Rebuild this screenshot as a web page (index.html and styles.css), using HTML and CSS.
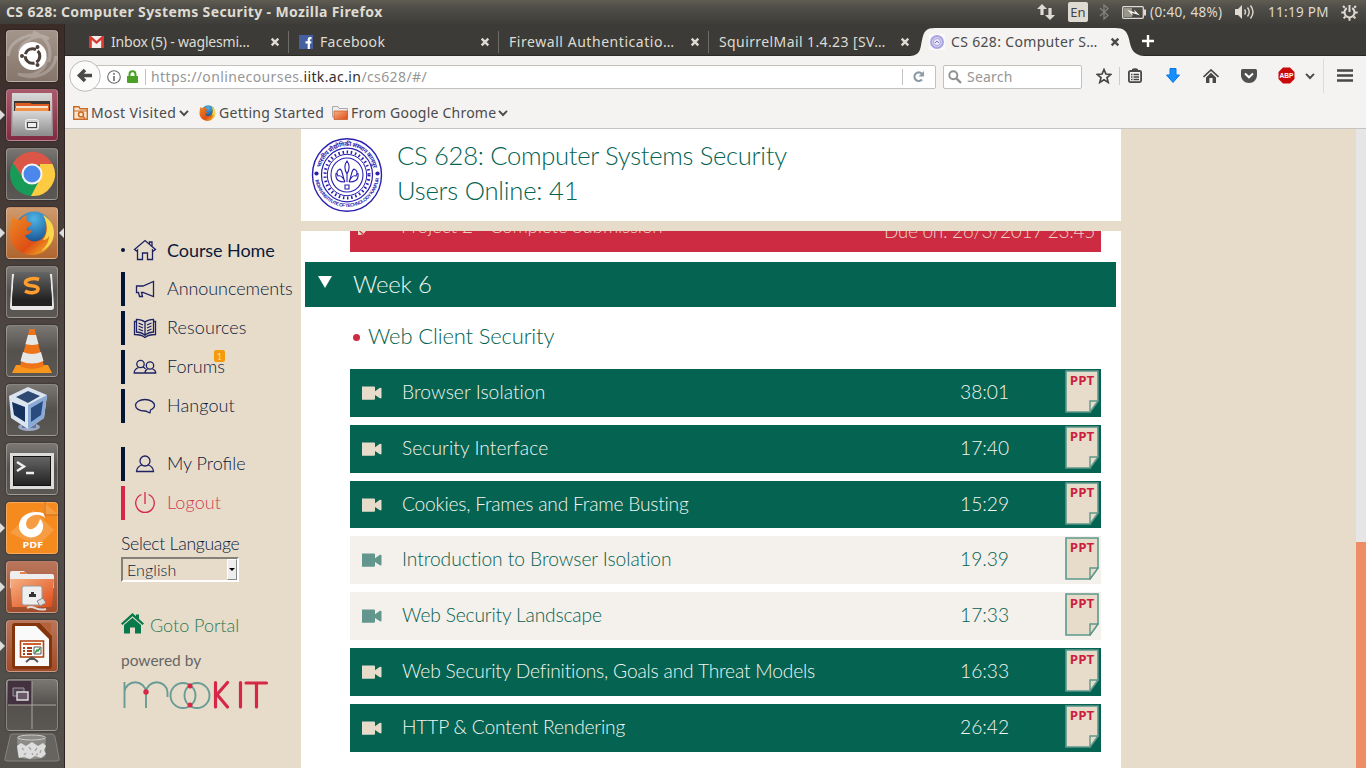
FILE: index.html
```html
<!DOCTYPE html>
<html lang="en">
<head>
<meta charset="utf-8">
<title>CS 628: Computer Systems Security</title>
<link rel="stylesheet" href="styles.css">
</head>
<body>
<svg class="defs" width="0" height="0">
  <defs>
    <linearGradient id="steel" x1="0" y1="0" x2="0" y2="1"><stop offset="0" stop-color="#d8d8d8"/><stop offset="1" stop-color="#8e8e8e"/></linearGradient>
    <linearGradient id="flame" x1="0" y1="0" x2="1" y2="1"><stop offset="0" stop-color="#f08a24"/><stop offset=".6" stop-color="#dd4f15"/><stop offset="1" stop-color="#f7c52c"/></linearGradient>
    <radialGradient id="globe" cx=".5" cy=".2" r=".8"><stop offset="0" stop-color="#4fb4e6"/><stop offset="1" stop-color="#0b3a7c"/></radialGradient>
    <linearGradient id="folder" x1="0" y1="0" x2="1" y2="1"><stop offset="0" stop-color="#f6b184"/><stop offset="1" stop-color="#e04a16"/></linearGradient>
    <linearGradient id="dark" x1="0" y1="0" x2="0" y2="1"><stop offset="0" stop-color="#666"/><stop offset="1" stop-color="#222"/></linearGradient>
  </defs>
  <symbol id="cam" viewBox="0 0 21 14"><path d="M1 .5H13Q14 .5 14 1.500V5.300L18.500 2Q20.500 1.300 20.500 2.500V11.500Q20.500 13 18.500 12L14 9V12.500Q14 13.700 13 13.700H1Z" fill="currentColor"/></symbol>
  <symbol id="close" viewBox="0 0 10 10"><path d="M1.700 1.700 8.300 8.300M8.300 1.700 1.700 8.300" stroke="currentColor" stroke-width="2.400"/></symbol>
  <symbol id="chev" viewBox="0 0 10 8"><path d="M1 1.800 5 6 9 1.800" fill="none" stroke="currentColor" stroke-width="1.900"/></symbol>
  <symbol id="fox" viewBox="0 0 44 44">
    <circle cx="24" cy="19" r="18.500" fill="url(#globe)"/>
    <path d="M3 5C5 8 7 9 10 9 12 6 14 5 17 4 16 7 16 9 18 11L22 12 20 15C17 16 16 18 17 20L22 19C21 23 17 24 15 24 17 30 25 32 30 29 35 26 37 20 36 13 40 16 43 20 43 25 42 36 33 44 22 44 10 44 0 35 0 23 0 16 1 10 3 5Z" fill="url(#flame)"/>
    <path d="M33 4C38 13 38 22 33 29 36 29 38 27 39 25 39 31 36 36 31 40 39 37 44 30 44 22 44 14 40 8 33 4Z" fill="#f8d84a"/>
  </symbol>
  <symbol id="ppt" viewBox="0 0 34 43">
    <path class="sheet" d="M1 1H33V31L25 42H1Z" stroke-width="1.600"/>
    <path class="fold" d="M25 42V31H33Z" stroke-width="1.400"/>
    <text x="4.800" y="15" textLength="24.500" lengthAdjust="spacingAndGlyphs" class="ppt-word">PPT</text>
  </symbol>
  <symbol id="seal" viewBox="0 0 72 76">
    <g fill="none" stroke="#2a1fae">
      <ellipse cx="36" cy="38" rx="34.500" ry="36.300" stroke-width="1.400"/>
      <ellipse cx="36" cy="38" rx="25.500" ry="26.800" stroke-width="1.200"/>
      <ellipse cx="36" cy="38" rx="22" ry="23" stroke-width="3" stroke-dasharray="1.500 2.700"/>
      <ellipse cx="36" cy="38" rx="19.700" ry="20.700" stroke-width="1"/>
      <ellipse cx="36" cy="38" rx="16" ry="17" stroke-width="1.100"/>
      <path d="M36 24C33 28 33 32 36 37 39 32 39 28 36 24ZM36 36V45M34 48H38V52H34ZM34 45C31 38 32 34 29 32 26 33 25 36 27 39 30 38 32 40 34 45ZM38 45C41 38 40 34 43 32 46 33 47 36 45 39 42 38 40 40 38 45ZM25 36C24 44 29 45 34 45M47 36C48 44 43 45 38 45" stroke-width="1.100"/>
    </g>
    <path id="arcTop" d="M8.800 38A27.200 29 0 0 1 63.200 38" fill="none"/>
    <path id="arcBottom" d="M3.600 36A32.400 34 0 0 0 68.400 36" fill="none"/>
    <g fill="#2a1fae"><circle cx="5.500" cy="36.500" r="2.100"/><circle cx="66.500" cy="36.500" r="2.100"/>
      <text class="seal-hi"><textPath href="#arcTop" startOffset="7" textLength="74">भारतीय प्रौद्योगिकी संस्थान कानपुर</textPath></text>
      <text class="seal-en"><textPath href="#arcBottom" startOffset="7" textLength="92">INDIAN INSTITUTE OF TECHNOLOGY KANPUR</textPath></text>
    </g>
  </symbol>
</svg>

<div class="desktop">
  <header class="panel">
    <span class="window-title">CS 628: Computer Systems Security - Mozilla Firefox</span>
    <div class="tray">
      <svg class="t-net" width="18" height="16" viewBox="0 0 18 16" fill="#dfdbd2"><path d="M5 0 10 5H6.600V11H3.400V5H0ZM13 16 8 11H11.400V4H14.600V11H18Z"/></svg>
      <span class="t-lang">En</span>
      <svg class="t-bt" width="10" height="16" viewBox="0 0 10 16"><path d="M1 4 9 11.500 5 15V1L9 4.500 1 12" fill="none" stroke="#85827b" stroke-width="1.300"/></svg>
      <svg class="t-bat" width="24" height="13" viewBox="0 0 24 13"><rect x=".7" y=".7" width="20.600" height="11.600" rx="1" fill="none" stroke="#dfdbd2" stroke-width="1.300"/><path d="M22 3.500H24V9.500H22Z" fill="#dfdbd2"/><path d="M2 2H10V11H2Z" fill="#98958c"/><path d="M5 3.500 13 6.500 12 3.500 18 9.500 10 7 11 10Z" fill="#f2efe8"/></svg>
      <span class="t-power">(0:40, 48%)</span>
      <svg class="t-vol" width="20" height="16" viewBox="0 0 20 16"><path d="M0 5H3L7 1V15L3 11H0Z" fill="#dfdbd2"/><path d="M9.500 5.500Q11.500 8 9.500 10.500M12.500 3.500Q16 8 12.500 12.500M15.500 1.500Q20.500 8 15.500 14.500" fill="none" stroke="#dfdbd2" stroke-width="1.400"/></svg>
      <span class="t-clock">11:19 PM</span>
      <svg width="17" height="17" viewBox="0 0 17 17" fill="none" stroke="#dfdbd2"><path d="M5.800 4.200A5 5 0 1 0 11.200 4.200" stroke-width="2"/><path d="M8.500 1V8" stroke-width="2"/><path d="M3.800 3.800 2 2M13.200 3.800 15 2M3 8.500H.3M14 8.500H16.700M4.500 12.500 2.600 14.400M12.500 12.500 14.400 14.400M8.500 14V16.700" stroke-width="2"/></svg>
    </div>
  </header>

  <div class="workspace">
    <nav class="launcher">
      <div class="tile tile-dash"><svg viewBox="0 0 52 52"><path d="M2 26C4 8 28 0 43 9 34 4 17 8 13 22M50 26C48 44 27 51 12 44 28 48 42 40 40 27M27 2Q48 10 43 32" fill="none" stroke="#fff" stroke-opacity=".22" stroke-width="3"/><circle cx="26.500" cy="26" r="14" fill="#fff"/><circle cx="26.500" cy="26" r="7.300" fill="none" stroke="#4b403a" stroke-width="3" stroke-dasharray="13.300 2" stroke-dashoffset="6"/><circle cx="16" cy="26" r="2" fill="#4b403a"/><circle cx="31.500" cy="17" r="2" fill="#4b403a"/><circle cx="31.500" cy="35" r="2" fill="#4b403a"/></svg></div>
      <div class="tile tile-files running"><svg viewBox="0 0 52 52"><path d="M6 4H46L47 47H5Z" fill="url(#steel)"/><path d="M8 12H44V23H8Z" fill="#3b3632"/><path d="M9 14H24L26 15H43V24H9Z" fill="#dd5e22"/><path d="M10 17H42V19H10Z" fill="#f3e4d4"/><path d="M9 19H42V24H9Z" fill="#f19045"/><path d="M7 22H45V46H7Z" fill="url(#steel)"/><rect x="19.500" y="30.500" width="13" height="10" rx="2" fill="#d0d0d0" stroke="#eee"/><rect x="21.500" y="33.500" width="9" height="5" fill="#eee" stroke="#444"/></svg></div>
      <div class="tile tile-dim"><svg viewBox="0 0 52 52"><circle cx="26" cy="26" r="22" fill="#189b58"/><path d="M7 15A22 22 0 0 1 46.500 17H26L18 31Z" fill="#dc5648"/><path d="M46.500 16A22 22 0 0 1 25 48L34 31 34 16Z" fill="#fccb42"/><circle cx="26" cy="26" r="10.500" fill="#f6f6f6"/><circle cx="26" cy="26" r="8.500" fill="#4c87ec"/></svg></div>
      <div class="tile tile-fox running focused"><svg viewBox="0 0 52 52"><use href="#fox" x="4" y="4" width="44" height="44"/></svg></div>
      <div class="tile tile-dim"><svg viewBox="0 0 52 52"><path d="M6 8 4 41Q4 44 7 44H45Q48 44 48 41L46 8Z" fill="#e8e8e8"/><path d="M8 10 6 36V40H46V36L44 10Z" fill="#222"/><path d="M10 6H42Q44 6 44 9L46 34H6L8 9Q8 6 10 6Z" fill="url(#dark)"/><path d="M33 13.500C28 11.500 19 13 19.500 17 20 21 31 18.500 32 22.500 32.500 27 24 28 19 25" fill="none" stroke="#ff9d2e" stroke-width="3.600"/></svg></div>
      <div class="tile tile-dim"><svg viewBox="0 0 52 52"><path d="M10 40H42L46 48H6Z" fill="#f7951d"/><path d="M23.500 4H28.500L38 41Q26 47 14 41Z" fill="#ed7419"/><path d="M22 10H30L32.500 19Q26 21 19.500 19ZM17 27Q26 31 35 27L37.500 36Q26 41 14.500 36Z" fill="#e5e7e7"/></svg></div>
      <div class="tile tile-dim"><svg viewBox="0 0 52 52"><ellipse cx="23" cy="43" rx="11" ry="4" fill="#9ba9c4"/><path d="M16 36H30V44H16Z" fill="#66779c"/><path d="M3 12 22 3 41 11 38 34 22 45 5 34Z" fill="#dbe5f0"/><path d="M10 13 22 7 34 12 22 19Z" fill="#2e4a70"/><path d="M6 18 19 23 19 38 8 31Z" fill="#16335f"/><path d="M22 21 41 11 38 34 22 45Z" fill="#8aaad6"/><path d="M25 24 37 17 35 31 25 38Z" fill="#284b80"/></svg></div>
      <div class="tile tile-dim"><svg viewBox="0 0 52 52"><rect x="4" y="10" width="44" height="36" fill="#dcdcdc"/><rect x="7.500" y="13.500" width="37" height="29" fill="url(#dark)" stroke="#111"/><path d="M11 19 18 23.500 11 28M20 30H28" fill="none" stroke="#eee" stroke-width="2.500"/></svg></div>
      <div class="tile tile-pdf running"><svg viewBox="0 0 52 52"><path d="M38 0V13H52M4 31 27 8 48 28 32 44Z" fill="#fff" fill-opacity=".17"/><path d="M39 0V13H52" fill="none" stroke="#d16c13"/><path d="M37 11C27 8 14 12 13 23 12 33 24 38 31 34 38 31 39 21 34 17 32 24 28 28 23 27 19 25 19 18 24 15 29 12 34 12 39 16 38 13 38 12 37 11Z" fill="#fff"/><text x="16.500" y="46" textLength="20.500" lengthAdjust="spacingAndGlyphs" class="pdf-word">PDF</text></svg></div>
      <div class="tile tile-rust running"><svg viewBox="0 0 52 52"><path d="M4 12Q4 10 6 10H18L21 13H46Q48 13 48 15V27H4Z" fill="#eee"/><path d="M14 12H20" stroke="#e78349" stroke-width="2"/><path d="M4 18H48L46 46H6Z" fill="url(#folder)"/><rect x="16" y="25" width="20" height="19" rx="2" fill="#eee" stroke="#999"/><path d="M23 36V33H25V31H28V33H30V36Z" fill="#333"/><path d="M21 47C28 43 30 51 40 48" stroke="#ddd" stroke-width="2" fill="none"/><path d="M31 40 37 37 40 42 34 45Z" fill="#ddd" stroke="#888"/></svg></div>
      <div class="tile tile-rust running"><svg viewBox="0 0 52 52"><path d="M9 3H34L46 16V46Q46 49 43 49H9Q6 49 6 46V6Q6 3 9 3Z" fill="#85350c"/><path d="M35 3H45V14Z" fill="#b5623b"/><path d="M9 6H30L43 19V46H9Z" fill="#fafafa"/><rect x="14.500" y="21" width="23" height="16" fill="#fff" stroke="#b34617" stroke-width="1.600"/><path d="M17 24H35" stroke="#cf622c" stroke-width="2"/><path d="M17 28H19M17 31H19M17 34H19M21 28H26M21 31H26M21 34H26" stroke="#a33f16" stroke-width="1.800"/><path d="M28 27H35V34H28Z" fill="none" stroke="#555"/><path d="M29 33 31 30 32 31 34 28" stroke="#2a9d43" stroke-width="1.500" fill="none"/><path d="M26 37 20 42M26 37 32 42M26 37V40" stroke="#555" stroke-width="2"/></svg></div>
      <div class="tile tile-dim tile-work"><svg viewBox="0 0 52 52"><path d="M2 2H26V26H2Z" fill="#43313f"/><path d="M26 2V50M2 26H50" stroke="#aaa69f" stroke-width="1"/><path d="M7 9H18V17H7Z" fill="#524353" stroke="#999"/><path d="M11 13H22V21H11Z" fill="#6a5868" stroke="#ddd" stroke-width="1.400"/></svg></div>
      <svg class="trash" width="56" height="30" viewBox="0 0 56 30"><path d="M8 1H48Q50 1 51 4L55 25Q56 28 53 28H3Q0 28 1 25L6 4Q6 1 8 1Z" fill="#666460" stroke="#85827d"/><path d="M13 4 14 24Q28 29 41 24L42 4Z" fill="#a5a5a2" fill-opacity=".6"/><path d="M13 13 17 10 22 13 28 9 34 13 39 10 42 13 40 17 42 21 37 25 31 23 26 26 20 24 15 25 14 20Z" fill="#ddd"/><path d="M18 15 20 17M25 14 27 17M33 15 31 18M37 17 36 20M22 20 20 22M28 20 29 22M34 21 32 22" stroke="#aaa" fill="none" stroke-width="1.500"/><ellipse cx="27.500" cy="4.500" rx="14" ry="2.500" fill="#8a8985" stroke="#ccc"/></svg>
    </nav>

    <div class="browser">
      <div class="tabs">
        <div class="tab"><svg width="15" height="12" viewBox="0 0 15 12"><path d="M0 0H15V12H0Z" fill="#f3efec"/><path d="M0 1V12H2.800V4L7.500 8 12.200 4V12H15V0H13L7.500 5 2 0H0Z" fill="#d9392f"/></svg><span class="n1">Inbox (5) - waglesmi…</span><svg class="x" width="10" height="10"><use href="#close"/></svg></div>
        <div class="tab"><svg width="14" height="14" viewBox="0 0 14 14"><path d="M0 0H14V14H0Z" fill="#4460a0"/><path d="M12.500 3.200H11Q9.800 3.200 9.800 4.500V14M6.500 7.300H12.300" fill="none" stroke="#fff" stroke-width="2.200"/></svg><span class="n2">Facebook</span><svg class="x" width="10" height="10"><use href="#close"/></svg></div>
        <div class="tab"><span class="n3">Firewall Authenticatio…</span><svg class="x" width="10" height="10"><use href="#close"/></svg></div>
        <div class="tab last"><span class="n4">SquirrelMail 1.4.23 [SV…</span><svg class="x" width="10" height="10"><use href="#close"/></svg></div>
        <div class="tab active"><svg class="tab-shape" width="234" height="28" viewBox="0 0 234 28"><path d="M0 28C11 27 10 21 12 12 14 3 16 0 25 0H205C214 0 217 3 219 11 221 21 223 27 234 28Z" fill="#f4f3f2"/></svg><svg class="mini-seal" width="16" height="16" viewBox="0 0 16 16"><path d="M0 0H16V16H0Z" fill="#fafafa"/><circle cx="8" cy="8" r="6" fill="#d3d0ee" stroke="#aaa5de" stroke-width="2"/><circle cx="8" cy="8" r="3.500" fill="#eceafa" stroke="#9a94d8" stroke-width=".8"/><path d="M6 9 8 7 10 9" fill="none" stroke="#7770c7"/></svg><span class="tab-name n5">CS 628: Computer S…</span><svg class="x" width="10" height="10"><use href="#close"/></svg></div>
        <svg class="new-tab" width="14" height="14" viewBox="0 0 14 14"><path d="M7 1V13M1 7H13" stroke="#fff" stroke-width="2.400"/></svg>
      </div>

      <div class="navbar">
        <svg class="back" width="32" height="32" viewBox="0 0 32 32"><circle cx="16" cy="16" r="15.300" fill="#fbfbfa" stroke="#bdbab6"/><path d="M16 10 10.500 15.500 16 21M11 15.500H23" fill="none" stroke="#4a4a4a" stroke-width="3.600"/></svg>
        <div class="url">
          <svg width="14" height="14" viewBox="0 0 14 14"><circle cx="7" cy="7" r="6.300" fill="none" stroke="#6a6a6a" stroke-width="1.100"/><path d="M7 3V4.700M7 6V11" stroke="#6a6a6a" stroke-width="1.600"/></svg>
          <svg class="lock" width="11" height="13" viewBox="0 0 11 13"><path d="M0 6H11V12Q11 13 10 13H1Q0 13 0 12Z" fill="#4ca025"/><path d="M2.500 6.500V4.500Q2.500 1.200 5.500 1.200T8.500 4.500V6.500" fill="none" stroke="#4ca025" stroke-width="2"/></svg>
          <span class="address">https://onlinecourses.<b>iitk.ac.in</b>/cs628/#/</span>
          <span class="reload"><svg width="13" height="13" viewBox="0 0 13 13"><path d="M10 9.500A4.300 4.300 0 1 1 9.800 3.700" fill="none" stroke="#8c9ba8" stroke-width="2.100"/><path d="M12 1V6.500H6.500Z" fill="#8c9ba8"/></svg></span>
        </div>
        <div class="search"><svg width="14" height="14" viewBox="0 0 14 14"><circle cx="5.300" cy="5.300" r="4" fill="none" stroke="#909090" stroke-width="1.900"/><path d="M8.300 8.300 13 13" stroke="#909090" stroke-width="2.400"/></svg><span>Search</span></div>
        <div class="tools">
          <svg width="16" height="16" viewBox="0 0 16 16"><path d="M8 1.500 9.900 6 14.800 6.400 11 9.600 12.200 14.400 8 11.800 3.800 14.400 5 9.600 1.200 6.400 6.100 6Z" fill="none" stroke="#454545" stroke-width="1.700"/></svg>
          <i class="tool-sep"></i>
          <svg width="14" height="15" viewBox="0 0 14 15"><rect x=".9" y="3" width="12.200" height="11.100" rx="1.500" fill="none" stroke="#484848" stroke-width="1.800"/><path d="M4 3V1Q7-.5 10 1V4H4Z" fill="#484848"/><path d="M3 6.500H4.500M5.500 6.500H11M3 9H4.500M5.500 9H11M3 11.500H4.500M5.500 11.500H11" stroke="#484848" stroke-width="1.300"/></svg>
          <svg class="g24" width="14" height="15" viewBox="0 0 14 15"><path d="M4 .5H10V7H13.500L7 14.500.5 7H4Z" fill="#168fff" stroke="#0876e0"/></svg>
          <svg class="g23" width="16" height="14" viewBox="0 0 16 14"><path d="M.5 8 8 1 15.500 8" fill="none" stroke="#484848" stroke-width="1.700"/><path d="M3 8.500 8 3.800 13 8.500V14H9.600V9H6.400V14H3Z" fill="#484848"/></svg>
          <svg class="g22" width="16" height="14" viewBox="0 0 16 14"><path d="M1.500 0H14.500Q16 0 16 1.500V6C16 10.500 12.500 14 8 14S0 10.500 0 6V1.500Q0 0 1.500 0Z" fill="#505050"/><path d="M4 4.500 8 8.300 12 4.500" fill="none" stroke="#fff" stroke-width="2"/></svg>
          <svg class="g21" width="17" height="17" viewBox="0 0 17 17"><path d="M5 .5H12L16.500 5V12L12 16.500H5L.5 12V5Z" fill="#cb0808"/><text x="1.500" y="11.300" textLength="14" lengthAdjust="spacingAndGlyphs" class="abp">ABP</text></svg>
          <svg class="g9" width="10" height="8"><use href="#chev"/></svg>
          <i class="menu-sep"></i>
          <svg width="16" height="13" viewBox="0 0 16 13"><path d="M0 1.500H16M0 6.500H16M0 11.500H16" stroke="#484848" stroke-width="2.600"/></svg>
        </div>
      </div>

      <div class="bookmarks">
        <svg width="15" height="14" viewBox="0 0 15 14"><path d="M.7 3V.7H6L7 2.700H14.300V13.300H.7Z" fill="#fbe5d0" stroke="#cb6a22" stroke-width="1.400"/><path d="M1 5H14" stroke="#cb6a22"/><circle cx="8" cy="8.500" r="2.500" fill="none" stroke="#cb6a22" stroke-width="1.500"/><path d="M10 10.500 12 12.500" stroke="#cb6a22" stroke-width="1.500"/></svg>
        <span class="b1">Most Visited</span><svg width="10" height="8"><use href="#chev"/></svg>
        <svg class="bm-fox" width="17" height="16"><use href="#fox"/></svg><span class="b2">Getting Started</span>
        <svg class="bm-folder" width="16" height="14" viewBox="0 0 16 14"><path d="M.5 11V.5H6L7 2.500H15.500V11Z" fill="#eee" stroke="#aaa"/><path d="M2 5H15.500V13.500H2Z" fill="url(#folder)" stroke="#c95422" stroke-width=".7"/></svg>
        <span class="b3">From Google Chrome</span><svg width="10" height="8"><use href="#chev"/></svg>
      </div>

      <div class="page">
        <aside class="side">
          <ul class="menu">
            <li class="current"><svg width="24" height="22" viewBox="0 0 24 22"><path d="M1.500 10.500 12 1.500 22.500 10.500 20.500 12 19.500 11V20.500H14.500V14H9.500V20.500H4.500V11L3.500 12ZM16.500 5V3H19V7"/></svg><span class="m1">Course Home</span></li>
            <li><svg width="24" height="22" viewBox="0 0 24 22"><path d="M3.500 8H10L20.500 3.500V18.500L10 14.500H8.500L9.500 18.500H6.500L5.500 14.500H3.500Z"/></svg><span class="m2">Announcements</span></li>
            <li><svg width="24" height="22" viewBox="0 0 24 22"><path d="M12 5C9 2.500 7 2.300 3.500 2.300V15C7 15 9.500 16 12 18 14.500 16 17 15 20.500 15V2.300C17 2.300 15 2.500 12 5ZM12 5V19M3 4.500H1.500V17.500C6 17.500 9 18 12 20.500 15 18 18 17.500 22.500 17.500V4.500H21M5.500 6 10 8M5.500 9 10 11M5.500 12 10 14M18.500 6 14 8M18.500 9 14 11M18.500 12 14 14"/></svg><span class="m3">Resources</span></li>
            <li><svg width="24" height="22" viewBox="0 0 24 22"><circle cx="7.500" cy="8" r="3.700"/><circle cx="17" cy="9.500" r="3.700"/><path d="M5.500 11.500C3 12.500 1.200 14 1.200 17H12C12 14.500 12.500 14 14.500 13.200M9.800 11Q11.500 11.500 12.500 13M12 17H22.700C22.700 14.500 21 13.500 19.500 13"/></svg><span class="m4">Forums<em class="count">1</em></span></li>
            <li><svg width="24" height="22" viewBox="0 0 24 22"><path d="M17 17.800C14 17.500 14.500 16 12 16 6 16 2.500 13.500 2.500 10.300S6.500 4.500 12 4.500 21.500 7.500 21.500 10.300C21.500 12.500 20 14 17.500 15Z"/></svg><span class="m5">Hangout</span></li>
            <li class="profile"><svg width="24" height="22" viewBox="0 0 24 22"><circle cx="12" cy="8" r="5"/><path d="M9 12C5.500 13 3.800 15 3.500 18.500H20.500C20.200 15 18.500 13 15 12"/></svg><span class="m6">My Profile</span></li>
            <li class="logout"><svg width="24" height="22" viewBox="0 0 24 22"><path d="M8.500 2.500A9.300 9.300 0 1 0 15.500 2.500M12 0V12"/></svg><span class="m7">Logout</span></li>
          </ul>
          <div class="lang-label">Select Language</div>
          <div class="lang"><span>English</span><i class="lang-btn"></i></div>
          <div class="portal"><svg width="23" height="21" viewBox="0 0 23 21" fill="#08794b"><path d="M11.500 0 15 3.200V1.500H18V6L23 10.500 21.500 12 11.500 3.200 1.500 12 0 10.500Z"/><path d="M3 12 11.500 4.700 20 12V20.500H14V14.500H9V20.500H3Z"/></svg><span>Goto Portal</span></div>
          <div class="powered">powered by</div>
          <svg class="mookit" width="146" height="30" viewBox="0 0 146 30"><g fill="none" stroke="#699c94" stroke-width="1.900"><path d="M1.500 28V2M1.500 12A10.800 10.800 0 0 1 23 12V28M23 12A10.800 10.800 0 0 1 44.500 12V17"/><ellipse cx="60" cy="15.500" rx="12.500" ry="12.500"/><ellipse cx="74" cy="15.500" rx="12.500" ry="12.500"/></g><g fill="none" stroke="#d62846" stroke-width="3.200" stroke-linecap="round"><path d="M92.500 2.500V27M104.500 2.500 94 14.500 104.500 27M117.500 2.500V27M123 3H143.500M133.500 3V27"/></g><g fill="#d62846"><circle cx="23" cy="12" r="2.700"/><circle cx="67" cy="6" r="2.500"/><circle cx="67" cy="25" r="2.500"/></g></svg>
        </aside>

        <main class="main">
          <div class="course-head">
            <svg width="72" height="76"><use href="#seal"/></svg>
            <div class="course-text"><div class="h1">CS 628: Computer Systems Security</div><div class="h2">Users Online: 41</div></div>
          </div>
          <div class="content">
            <div class="due"><svg width="14" height="16" viewBox="0 0 14 16"><path d="M0 9 9 0 13 5 5 14.500 0 15Z" fill="#e7dcca"/><path d="M1 10.500 5 14" stroke="#cc2b41" stroke-width="1.200"/></svg><span class="due-name">Project 2 - Complete Submission</span><span class="due-date">Due on: 26/3/2017 23:45</span></div>
            <div class="week"><i class="tri"></i><span>Week 6</span></div>
            <div class="topic"><i class="dot"></i><span>Web Client Security</span></div>
            <div class="lessons">
              <div class="lesson"><svg class="cam" width="21" height="14"><use href="#cam"/></svg><span class="name l1">Browser Isolation</span><span class="time">38:01</span><svg class="ppt" width="34" height="43"><use href="#ppt"/></svg></div>
              <div class="lesson"><svg class="cam" width="21" height="14"><use href="#cam"/></svg><span class="name l2">Security Interface</span><span class="time">17:40</span><svg class="ppt" width="34" height="43"><use href="#ppt"/></svg></div>
              <div class="lesson"><svg class="cam" width="21" height="14"><use href="#cam"/></svg><span class="name l3">Cookies, Frames and Frame Busting</span><span class="time">15:29</span><svg class="ppt" width="34" height="43"><use href="#ppt"/></svg></div>
              <div class="lesson seen"><svg class="cam" width="21" height="14"><use href="#cam"/></svg><span class="name l4">Introduction to Browser Isolation</span><span class="time">19.39</span><svg class="ppt" width="34" height="43"><use href="#ppt"/></svg></div>
              <div class="lesson seen"><svg class="cam" width="21" height="14"><use href="#cam"/></svg><span class="name l5">Web Security Landscape</span><span class="time">17:33</span><svg class="ppt" width="34" height="43"><use href="#ppt"/></svg></div>
              <div class="lesson"><svg class="cam" width="21" height="14"><use href="#cam"/></svg><span class="name l6">Web Security Definitions, Goals and Threat Models</span><span class="time">16:33</span><svg class="ppt" width="34" height="43"><use href="#ppt"/></svg></div>
              <div class="lesson"><svg class="cam" width="21" height="14"><use href="#cam"/></svg><span class="name l7">HTTP &amp; Content Rendering</span><span class="time">26:42</span><svg class="ppt" width="34" height="43"><use href="#ppt"/></svg></div>
            </div>
          </div>
        </main>
        <div class="scroll"><i class="thumb"></i></div>
      </div>
    </div>
  </div>
</div>
</body>
</html>
```
FILE: styles.css
```css
* { box-sizing: border-box; }
body { margin: 0; font-family: "Noto Sans", "Open Sans", sans-serif; }
svg { display: block; flex: none; }
.defs { position: absolute; }
.desktop { width: 1366px; height: 768px; overflow: hidden; display: flex; flex-direction: column; white-space: nowrap; }
.workspace { display: flex; flex: 1; min-height: 0; }

/* top panel */
.panel { height: 24px; display: flex; justify-content: space-between; align-items: center; padding: 0 8px 0 6px; background: linear-gradient(#5f5d52, #504e48 30%, #3e3d39); color: #dfdbd2; }
.window-title { font-size: 14px; line-height: 22px; font-weight: 700; letter-spacing: .38px; }
.tray { display: flex; align-items: center; font-size: 13.5px; }
.t-lang { width: 20px; height: 20px; margin-left: 13px; border-radius: 2px; background: #dfdbd2; color: #45443f; font-size: 13px; line-height: 20px; text-align: center; }
.t-bt { margin-left: 11px; }
.t-bat { margin-left: 13px; }
.t-power { margin-left: 4px; width: 73px; letter-spacing: .35px; }
.t-vol { margin-left: 12px; }
.t-clock { margin-left: 13px; width: 60px; margin-right: 13px; letter-spacing: .3px; }

/* launcher */
.launcher { width: 65px; border-right: 1px solid #2c2523; background: linear-gradient(#3b2c28, #4f4844 45%, #53504c); padding: 6px 0 0 6px; display: flex; flex-direction: column; gap: 7px; }
.tile { position: relative; width: 52px; height: 52px; flex: none; border-radius: 4px; border: 1px solid rgba(255,255,255,.28); box-shadow: 0 0 2px rgba(0,0,0,.6); }
.tile svg { width: 52px; height: 52px; margin: -1px; }
.tile-dash { background: linear-gradient(#a3958a, #85756b); }
.tile-files { background: linear-gradient(#a85a6b, #812b40); }
.tile-dim { background: linear-gradient(#7a7672, #54504d 50%, #5b5753); }
.tile-fox { background: linear-gradient(#cf9a6d, #b0652e); }
.tile-pdf { background: #f58a1f; }
.tile-rust { background: linear-gradient(#b9765b, #a04c2a); }
.running::before { content: ""; position: absolute; left: -7px; top: 20px; border: 5px solid transparent; border-left-color: #ddd; border-right: 0; }
.focused::after { content: ""; position: absolute; right: -7px; top: 20px; border: 5px solid transparent; border-right-color: #ddd; border-left: 0; }
.tile-work { margin-bottom: -5px; }
.trash { margin-left: -2px; }

/* browser chrome */
.browser { flex: 1; display: flex; flex-direction: column; min-width: 0; background: #f4f3f2; color: #4b4b4b; }
.tabs { height: 32px; display: flex; align-items: center; background: #3c3b37; border-bottom: 1px solid #2b2a27; padding-left: 14px; color: #dfdbd2; font-size: 14px; flex: none; }
.tab { position: relative; width: 210px; height: 22px; margin-top: 4px; padding: 0 8px 0 10px; display: flex; align-items: center; gap: 7px; border-right: 1px solid #6e6c66; line-height: 20px; }
.tab.last, .tab.active { border-right: 0; padding-right: 9px; }
.tab > .x { margin-left: auto; }
.tab.active { color: #4b4b4b; z-index: 1; gap: 6px; }
.tab.active > .mini-seal, .tab.active > .tab-name, .tab.active > .x { position: relative; }
.n1 { letter-spacing: -.2px; }
.n2 { letter-spacing: .3px; }
.n3 { letter-spacing: .55px; }
.n4 { letter-spacing: .4px; }
.n5 { letter-spacing: .33px; }
.tab-shape { position: absolute; left: -9px; top: -3px; }
.new-tab { margin: 3px 0 0 12px; }
.navbar { height: 41px; display: flex; align-items: center; padding-left: 4px; flex: none; }
.back { position: relative; z-index: 1; margin: -2px -16px 0 0; }
.url { width: 851px; height: 24px; border: 1px solid #c4c1bd; border-radius: 2px; background: #fff; display: flex; align-items: center; padding-left: 21px; }
.lock { margin-left: 6px; }
.address { margin-left: 7px; padding-left: 5px; border-left: 1px solid #c4c1bd; color: #969696; font-size: 14px; line-height: 16px; letter-spacing: .39px; }
.address b { font-weight: 400; color: #2e2e2e; }
.reload { margin-left: auto; width: 33px; height: 16px; border-left: 1px solid #c4c1bd; padding: 1px 0 0 9px; }
.search { margin-left: 7px; width: 139px; height: 24px; border: 1px solid #c4c1bd; border-radius: 2px; background: #fff; display: flex; align-items: center; gap: 5px; padding-left: 4px; color: #969696; font-size: 14px; letter-spacing: .2px; }
.tools { display: flex; align-items: center; margin: -2px 0 0 14px; }
.tool-sep { width: 1px; height: 18px; background: #ccc; margin: 0 8px 0 7px; }
.g24 { margin-left: 24px; }
.g23 { margin-left: 23px; }
.g22 { margin-left: 22px; }
.g21 { margin-left: 21px; }
.g9 { margin-left: 10px; }
.menu-sep { width: 1px; height: 34px; background: #dddbd8; margin: 0 13px 0 8px; }
.abp { font: 700 7px "Liberation Sans", sans-serif; fill: #fff; }
.bookmarks { height: 32px; display: flex; align-items: center; padding-left: 8px; border-bottom: 1px solid #c6c3c0; font-size: 14px; flex: none; }
.bookmarks span { margin: 0 2px 0 3px; }
.b1 { width: 86px; letter-spacing: .4px; }
.b2 { width: 105px; letter-spacing: .3px; }
.b3 { width: 145px; letter-spacing: .22px; }
.bm-fox { margin-left: 10px; }
.bm-folder { margin-left: 6px; }

/* page */
.page { flex: 1; display: flex; min-height: 0; background: #e7dcca; font-family: Lato, sans-serif; font-weight: 300; }
.side { width: 236px; padding: 105px 0 0 56px; color: #0a1a3c; font-size: 18px; }
.menu { list-style: none; margin: 0; padding: 0; display: flex; flex-direction: column; gap: 5px; }
.menu li { height: 34px; display: flex; align-items: center; border-left: 4px solid #041636; padding-left: 8px; gap: 10px; }
.menu svg { fill: none; stroke: #1c2264; stroke-width: 1.3; }
.menu span { margin-top: -2px; }
.menu .current { position: relative; height: 33px; border-color: transparent; font-weight: 400; }
.current svg { margin-top: -2px; }
.current::before { content: ""; position: absolute; left: -4px; top: 14px; width: 4px; height: 4px; border-radius: 50%; background: #041636; }
.menu .profile { margin-top: 19px; }
.menu .logout { border-color: #d62846; color: #d03a52; }
.menu .logout svg { stroke: #d62846; }
.m1, .m2 { letter-spacing: -.07px; }
.m3, .m5, .m7 { letter-spacing: .12px; }
.m4 { position: relative; }
.count { position: absolute; left: 47px; top: -5px; width: 11px; height: 12px; border-radius: 2px; background: #f59a0c; color: #fff; font-size: 10px; line-height: 12px; font-style: normal; text-align: center; }
.lang-label { margin-top: 13px; line-height: 22px; font-size: 17.600px; letter-spacing: -.3px; }
.lang { margin-top: 2px; width: 118px; height: 25px; border: 2px solid; border-color: #858178 #fff #fff #858178; display: flex; justify-content: space-between; padding-left: 4px; font-size: 16px; line-height: 22px; letter-spacing: .1px; }
.lang-btn { width: 10px; border: 1px solid; border-color: #fff #888 #888 #fff; background: #eee; display: flex; align-items: center; justify-content: center; }
.lang-btn::after { content: ""; border: 3px solid transparent; border-top-color: #000; border-bottom: 0; }
.portal { margin-top: 31px; display: flex; align-items: center; gap: 6px; color: #2c7a55; line-height: 24px; }
.portal svg { margin-top: -3px; }
.powered { margin-top: 12px; font-size: 15.500px; line-height: 22px; font-weight: 400; color: #666; }
.mookit { margin: 9px 0 0 2px; }

.main { width: 820px; display: flex; flex-direction: column; color: #046351; }
.course-head { height: 92px; flex: none; background: #fff; display: flex; padding: 8px 0 0 10px; gap: 14px; }
.course-text { font-size: 25.600px; line-height: 35px; padding-top: 1px; }
.h1 { letter-spacing: -.3px; }
.h2 { letter-spacing: -.2px; }
.content { flex: 1; min-height: 0; overflow: hidden; margin-top: 10px; background: #fff; padding: 0 5px 0 4px; }
.due { height: 48px; margin: -27px 15px 0 45px; background: #cc2b41; color: #eccfc4; display: flex; align-items: center; font-size: 19px; padding: 0 6px 0 8px; }
.due-name { margin-left: 29px; padding-bottom: 5px; letter-spacing: -.18px; }
.due-date { margin-left: auto; padding-top: 4px; letter-spacing: -.3px; }
.week { height: 45px; margin-top: 10px; background: #046351; color: #eef4f0; display: flex; align-items: center; padding: 0 0 3px 13px; gap: 21px; font-size: 24px; letter-spacing: -.25px; }
.tri { border: 7px solid transparent; border-top: 12px solid #fff; border-bottom: 0; margin-top: -2px; }
.topic { height: 61.900px; display: flex; align-items: center; padding: 0 0 5px 48px; gap: 8px; font-size: 22px; letter-spacing: -.15px; }
.dot { width: 7px; height: 7px; border-radius: 50%; background: #cc2b41; margin-top: 5px; }
.lessons { margin: 0 15px 0 45px; display: flex; flex-direction: column; gap: 8px; }
.lesson { height: 47.850px; display: flex; align-items: flex-start; background: #046351; color: #f2f5f0; font-size: 19.200px; line-height: 45.600px; }
.cam { margin: 17px 0 0 11px; color: #e7dcca; }
.name { margin-left: 20px; flex: 1; font-variant-ligatures: none; }
.l1, .l2 { letter-spacing: .07px; }
.l3 { letter-spacing: -.22px; }
.l4 { letter-spacing: -.04px; }
.l5 { letter-spacing: -.16px; }
.l6, .l7 { letter-spacing: -.18px; }
.time { width: 49px; text-align: right; }
.ppt { margin: 1px 2px 0 56px; }
.seen { background: #f4f0eb; color: #04614f; }
.seen .cam { color: #63978e; }
.sheet, .fold { fill: #e7dcca; stroke: #5d988c; }
.ppt-word { font: 700 13px "Open Sans", sans-serif; fill: #cc1f40; }
.pdf-word { font: 700 9.500px "Open Sans", sans-serif; fill: #fff; }
.seal-hi { font: 700 6px "Noto Sans", "Noto Sans Devanagari", sans-serif; }
.seal-en { font: 700 4.800px "Liberation Sans", sans-serif; }
.scroll { margin-left: auto; width: 10px; background: #e6e6e6; padding-top: 413px; }
.thumb { display: block; height: 226px; background: #ee8d67; }
```
